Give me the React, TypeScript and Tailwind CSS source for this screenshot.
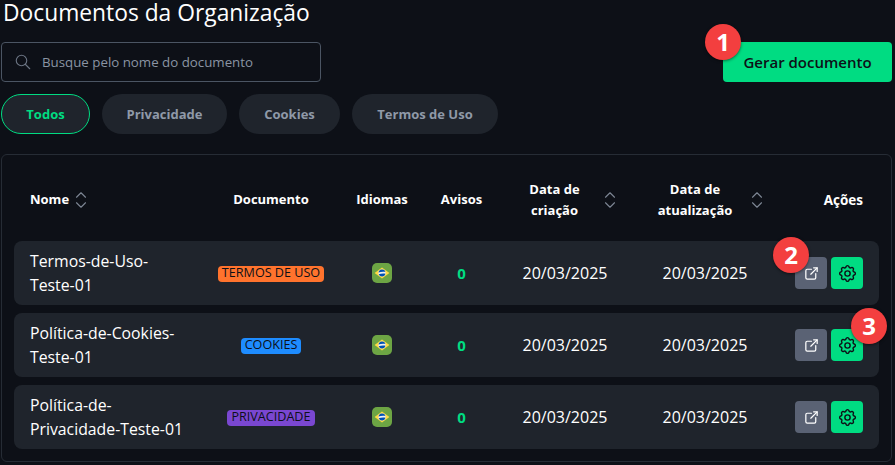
import React from "react";
import { TbChevronUp, TbChevronDown, TbSearch, TbExternalLink, TbSettings } from "react-icons/tb";

const grid = "grid grid-cols-[197px_120px_101px_59px_148px_130px_110px] items-center";
const F = '[font-family:"Open_Sans",sans-serif]';

function Sort() {
  return (
    <span className="flex flex-col items-center text-[#7d8694] shrink-0 -mx-[2px]">
      <TbChevronUp size={18} strokeWidth={1.5} />
      <TbChevronDown size={18} strokeWidth={1.5} className="-mt-[8px]" />
    </span>
  );
}

function Flag() {
  return (
    <svg width="20" height="20" viewBox="0 0 20 20">
      <rect width="20" height="20" rx="5" fill="#6da544" />
      <path d="M10 4.4 17.4 10 10 15.6 2.6 10Z" fill="#ffda44" />
      <circle cx="10" cy="10" r="3.6" fill="#f0f0f0" />
      <path d="M6.5 9.6a3.6 3.6 0 0 1 7-.7c-2.3-.5-4.8-.2-7 .7ZM6.7 11.3c2.1-.9 4.6-1.2 6.8-.6a3.6 3.6 0 0 1-6.8.6Z" fill="#0052b4" />
    </svg>
  );
}

function Badge({ n, className }: { n: string; className: string }) {
  return (
    <div className={`absolute w-9 h-9 rounded-full bg-[#f33f3f] text-white flex items-center justify-center text-[24px] font-bold shadow-[0_1px_3px_rgba(0,0,0,0.5)] [font-family:"Open_Sans",sans-serif] ${className}`}>
      {n}
    </div>
  );
}

const rows = [
  { name: ["Termos-de-Uso-", "Teste-01"], tag: "TERMOS DE USO", color: "bg-[#ff732d]" },
  { name: ["Política-de-Cookies-", "Teste-01"], tag: "COOKIES", color: "bg-[#1e8cff]" },
  { name: ["Política-de-", "Privacidade-Teste-01"], tag: "PRIVACIDADE", color: "bg-[#7a47d1]" },
];

function Pill({ label, active, className }: { label: string; active?: boolean; className: string }) {
  return (
    <button
      className={`h-10 rounded-full text-[13px] font-bold flex items-center justify-center pt-[1px] ${className} ${
        active ? "bg-[#1f242c] border border-[#00dc82] text-[#00dc82]" : "bg-[#1f242c] text-[#8f99a8]"
      }`}
    >
      {label}
    </button>
  );
}

export default function App() {
  return (
    <div className={`relative w-[895px] h-[465px] overflow-hidden bg-[#0d1017] text-white ${F}`}>
      <div className="pl-[1px] pr-[3px]">
        <h1 className="h-[42px] pl-[2px] text-[22.8px] leading-[26px] font-normal">Documentos da Organização</h1>
        <div className="flex justify-between items-start">
          <div className="w-[320px] h-10 rounded border border-[#4b5563] flex items-center pl-[12px] gap-[10px]">
            <TbSearch size={18} strokeWidth={1.5} className="text-[#6b7483]" />
            <span className="text-[13.3px] text-[#8a94a3] pt-[1px]">Busque pelo nome do documento</span>
          </div>
          <button className="w-[169px] h-10 rounded bg-[#00dc82] text-[#0d1017] text-[15px] font-semibold">Gerar documento</button>
        </div>
        <div className="flex gap-3 mt-3">
          <Pill label="Todos" active className="w-[89px]" />
          <Pill label="Privacidade" className="w-[125px]" />
          <Pill label="Cookies" className="w-[101px]" />
          <Pill label="Termos de Uso" className="w-[146px]" />
        </div>
        <div className="mt-5 h-[308px] w-[891px] rounded-md border border-[#262c35] px-3">
          <div className={`${grid} h-[86px] pt-[4px] text-[13px] font-bold`}>
            <div className="flex items-center gap-[5px] pl-4">Nome <Sort /></div>
            <div className="text-center">Documento</div>
            <div className="text-center pl-[1px]">Idiomas</div>
            <div className="text-center">Avisos</div>
            <div className="flex items-center justify-center gap-[7px]">
              <span className="w-[82px] text-center leading-[21px]">Data de criação</span>
              <Sort />
            </div>
            <div className="flex items-center justify-center gap-[11px] pl-[7px]">
              <span className="w-[88px] text-center leading-[21px]">Data de atualização</span>
              <Sort />
            </div>
            <div className="text-right pr-4 text-[13.5px]">Ações</div>
          </div>
          <div className="flex flex-col gap-2">
            {rows.map((r) => (
              <div key={r.tag} className={`${grid} h-16 rounded-lg bg-[#1f242c]`}>
                <div className="pl-4 text-[15.8px] leading-[24px] -mt-[1px]">
                  {r.name[0]}<br />{r.name[1]}
                </div>
                <div className="flex justify-center">
                  <span className={`${r.color} rounded-sm px-1 h-4 flex items-center text-[12.6px] text-[#0d1017] font-medium mt-[1px]`}>{r.tag}</span>
                </div>
                <div className="flex justify-center"><Flag /></div>
                <div className="text-center text-[#00dc82] font-bold text-[15px]">0</div>
                <div className="text-center text-[16px]">20/03/2025</div>
                <div className="text-center text-[16px] pl-[2px]">20/03/2025</div>
                <div className="flex justify-end gap-1 pr-4">
                  <button className="w-8 h-8 rounded bg-[#5a6274] flex items-center justify-center text-white">
                    <TbExternalLink size={17} strokeWidth={1.75} />
                  </button>
                  <button className="w-8 h-8 rounded bg-[#00dc82] flex items-center justify-center text-[#0d1017]">
                    <TbSettings size={21} strokeWidth={1.6} />
                  </button>
                </div>
              </div>
            ))}
          </div>
        </div>
      </div>
      <Badge n="1" className="left-[705px] top-[24px]" />
      <Badge n="2" className="left-[773px] top-[237px]" />
      <Badge n="3" className="left-[851px] top-[308px]" />
    </div>
  );
}
